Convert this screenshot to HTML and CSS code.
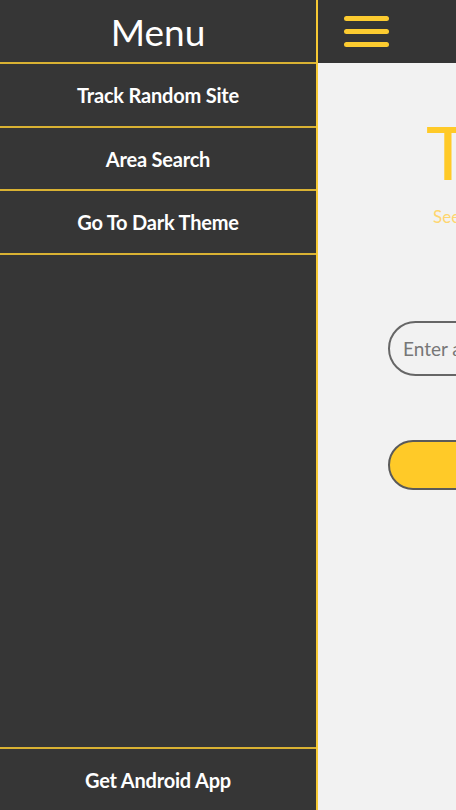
FILE: index.html
```html
<!DOCTYPE html>
<html>
<head>
<meta charset="utf-8">
<link rel="stylesheet" href="styles.css">
</head>
<body>
<div class="page">
  <nav class="sidebar">
    <div class="menu-title">Menu</div>
    <div class="menu-item">Track Random Site</div>
    <div class="menu-item">Area Search</div>
    <div class="menu-item">Go To Dark Theme</div>
    <div class="spacer"></div>
    <div class="menu-item bottom">Get Android App</div>
  </nav>
  <main class="main">
    <header class="topbar">
      <div class="burger"><span></span><span></span><span></span></div>
    </header>
    <section class="content">
      <h1 class="title">Track Site</h1>
      <p class="subtitle">See where a website is hosted</p>
      <div class="field"><span class="placeholder">Enter a website address</span></div>
      <div class="button">Track</div>
    </section>
  </main>
</div>
</body>
</html>
```
FILE: styles.css
```css
html, body {
  margin: 0;
  padding: 0;
  height: 810px;
  overflow: hidden;
  font-family: Lato, "Open Sans", sans-serif;
}
.page {
  display: flex;
  width: 456px;
  height: 810px;
  overflow: hidden;
}
.sidebar {
  flex: 0 0 316px;
  width: 316px;
  height: 810px;
  background: #363636;
  border-right: 2px solid #f6c934;
  display: flex;
  flex-direction: column;
}
.menu-title {
  height: 62px;
  border-bottom: 2px solid #d9b233;
  color: #ffffff;
  font-size: 37px;
  line-height: 64px;
  text-align: center;
}
.menu-item {
  height: 61.5px;
  border-bottom: 2px solid #d9b233;
  color: #ffffff;
  font-size: 20px;
  font-weight: 700;
  line-height: 62px;
  text-align: center;
  letter-spacing: -0.2px;
}
.spacer {
  flex: 1;
}
.menu-item.bottom {
  border-bottom: none;
  border-top: 2px solid #d9b233;
  height: 61px;
}
.main {
  flex: 0 0 456px;
  width: 456px;
  height: 810px;
  background: #f2f2f2;
}
.topbar {
  height: 63px;
  background: #353535;
  padding-left: 26px;
  display: flex;
  align-items: center;
}
.burger {
  display: flex;
  flex-direction: column;
  gap: 8px;
  width: 45px;
}
.burger span {
  display: block;
  height: 5px;
  border-radius: 3px;
  background: #fccb30;
}
.content {
  padding-top: 52px;
}
.title {
  margin: 0 0 0 108px;
  font-size: 74px;
  font-weight: 400;
  line-height: 1;
  color: #ffca28;
  white-space: nowrap;
}
.subtitle {
  margin: 18px 0 0 115px;
  font-size: 17px;
  line-height: 20px;
  color: #ffd66e;
  white-space: nowrap;
}
.field {
  margin: 94px 0 0 70px;
  width: 312px;
  height: 51px;
  border: 2px solid #666666;
  border-radius: 28px;
  display: flex;
  align-items: center;
  padding-left: 13px;
  box-sizing: content-box;
}
.placeholder {
  font-size: 19px;
  color: #777777;
  white-space: nowrap;
}
.button {
  margin: 64px 0 0 70px;
  width: 316px;
  height: 46px;
  border: 2px solid #5a5a5a;
  border-radius: 26px;
  background: #ffca28;
  color: #333;
  font-size: 20px;
  line-height: 46px;
  text-align: center;
}
```
